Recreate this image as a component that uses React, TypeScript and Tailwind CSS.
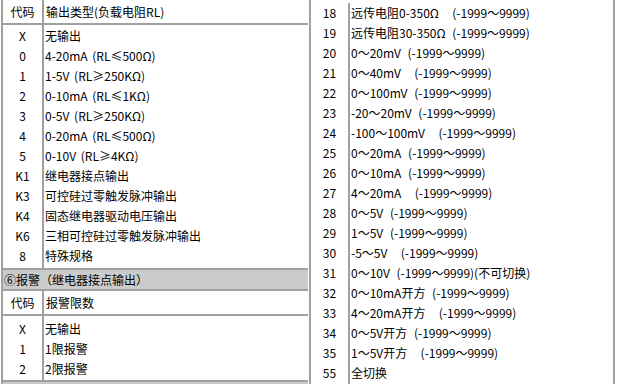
import React from "react";

const FONT = { fontFamily: '"Noto Sans CJK SC", "Liberation Sans", sans-serif' };

const outputRows: [string, string][] = [
  ["X", "无输出"],
  ["0", "4-20mA (RL≤500Ω)"],
  ["1", "1-5V (RL≥250KΩ)"],
  ["2", "0-10mA (RL≤1KΩ)"],
  ["3", "0-5V (RL≥250KΩ)"],
  ["4", "0-20mA (RL≤500Ω)"],
  ["5", "0-10V (RL≥4KΩ)"],
  ["K1", "继电器接点输出"],
  ["K3", "可控硅过零触发脉冲输出"],
  ["K4", "固态继电器驱动电压输出"],
  ["K6", "三相可控硅过零触发脉冲输出"],
  ["8", "特殊规格"],
];

const alarmRows: [string, string][] = [
  ["X", "无输出"],
  ["1", "1限报警"],
  ["2", "2限报警"],
];

const rightRows: [string, string][] = [
  ["18", "远传电阻0-350Ω  (-1999～9999)"],
  ["19", "远传电阻30-350Ω (-1999～9999)"],
  ["20", "0～20mV (-1999～9999)"],
  ["21", "0～40mV  (-1999～9999)"],
  ["22", "0～100mV (-1999～9999)"],
  ["23", "-20～20mV (-1999～9999)"],
  ["24", "-100～100mV  (-1999～9999)"],
  ["25", "0～20mA (-1999～9999)"],
  ["26", "0～10mA (-1999～9999)"],
  ["27", "4～20mA  (-1999～9999)"],
  ["28", "0～5V (-1999～9999)"],
  ["29", "1～5V (-1999～9999)"],
  ["30", "-5～5V  (-1999～9999)"],
  ["31", "0～10V (-1999～9999)(不可切换)"],
  ["32", "0～10mA开方 (-1999～9999)"],
  ["33", "4～20mA开方  (-1999～9999)"],
  ["34", "0～5V开方 (-1999～9999)"],
  ["35", "1～5V开方  (-1999～9999)"],
  ["55", "全切换"],
];

function HeaderRow({ a, b }: { a: string; b: string }) {
  return (
    <div className="flex h-[23px] items-center">
      <div className="w-[41px] h-full flex items-center justify-center border-r-2 border-[#a0a0a0]">{a}</div>
      <div className="pl-[2px] whitespace-pre">{b}</div>
    </div>
  );
}

function Body({ rows, pt, pb }: { rows: [string, string][]; pt: string; pb: string }) {
  return (
    <div className="flex">
      <div className={`w-[41px] border-r-2 border-[#a0a0a0] ${pt} ${pb}`}>
        {rows.map(([c]) => (
          <div key={c} className="h-[20px] leading-[20px] text-center">{c}</div>
        ))}
      </div>
      <div className={`flex-1 ${pt} ${pb}`}>
        {rows.map(([c, t]) => (
          <div key={c} className="h-[20px] leading-[20px] pl-[1px] whitespace-pre [word-spacing:2px]">{t}</div>
        ))}
      </div>
    </div>
  );
}

const HLine = () => <div className="h-[2px] bg-[#a0a0a0]" />;

export default function App() {
  return (
    <div className="w-[619px] h-[384px] overflow-hidden bg-white text-[12px] text-black flex" style={FONT}>
      <div className="ml-px w-[307px] border-l-2 border-[#a0a0a0] flex flex-col shrink-0">
        <HeaderRow a="代码" b="输出类型(负载电阻RL)" />
        <HLine />
        <Body rows={outputRows} pt="pt-[1px]" pb="pb-[2px]" />
        <HLine />
        <div className="h-[19px] bg-[#cbcbcb] leading-[19px] pl-[1px]">⑥报警（继电器接点输出）</div>
        <HLine />
        <HeaderRow a="代码" b="报警限数" />
        <HLine />
        <Body rows={alarmRows} pt="pt-[3px]" pb="pb-[1px]" />
        <HLine />
        <div className="flex-1 bg-[#cbcbcb]" />
      </div>
      <div className="ml-px w-[306px] shrink-0 border-x-2 border-[#a0a0a0] flex pt-[3px]">
        <div className="w-[39px] border-r-2 border-[#a0a0a0]">
          {rightRows.map(([c]) => (
            <div key={c} className="h-[20px] leading-[20px] text-center">{c}</div>
          ))}
        </div>
        <div className="flex-1">
          {rightRows.map(([c, t]) => (
            <div key={c} className="h-[20px] leading-[20px] pl-[1px] whitespace-pre [word-spacing:4px]">{t}</div>
          ))}
        </div>
      </div>
    </div>
  );
}
